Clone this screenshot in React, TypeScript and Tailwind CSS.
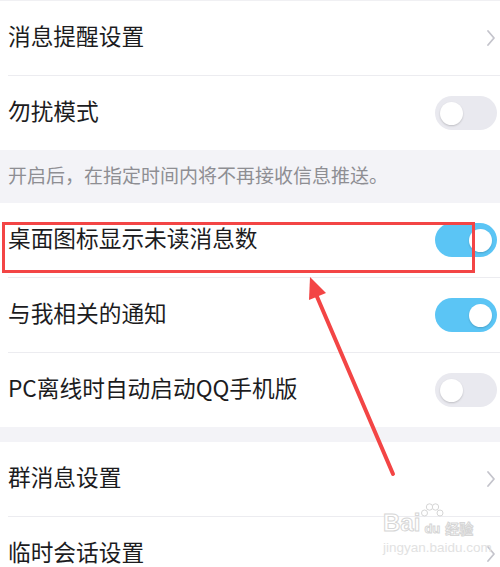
import React from 'react';

type Row =
  | { id: number; label: string; kind: 'link' }
  | { id: number; label: string; kind: 'toggle'; on: boolean };

const Chevron: React.FC = () => (
  <svg width="10" height="18" viewBox="0 0 10 18" className="mr-[4px] shrink-0">
    <polyline points="2,2 8,9 2,16" fill="none" stroke="#c4c4cc" strokeWidth="1.8" strokeLinecap="round" strokeLinejoin="round" />
  </svg>
);

const Toggle: React.FC<{ on: boolean }> = ({ on }) => (
  <div
    className={`mr-[3px] flex h-[34px] w-[62px] shrink-0 items-center rounded-full px-[5px] ${
      on ? 'justify-end bg-[#5bc5f5]' : 'justify-start bg-[#e9e9ef]'
    }`}
  >
    <div className="h-[23px] w-[23px] rounded-full bg-white shadow-[0_1px_2px_rgba(0,0,0,0.18)]" />
  </div>
);

const SettingRow: React.FC<{ row: Row; first?: boolean }> = ({ row, first }) => (
  <div
    className={`flex items-center justify-between bg-white pl-[8px] ${
      first ? 'h-[75px] border-t border-[#f0f0f3]' : 'h-[74px]'
    }`}
  >
    <span className="-translate-y-[2px] text-[22.7px] leading-none text-[#1c1c1e]">{row.label}</span>
    {row.kind === 'link' ? <Chevron /> : <Toggle on={row.on} />}
  </div>
);

const Divider: React.FC = () => (
  <div className="bg-white pl-[8px]">
    <div className="h-px bg-[#ececf0]" />
  </div>
);

const App: React.FC = () => {
  const top: Row[] = [
    { id: 1, label: '消息提醒设置', kind: 'link' },
    { id: 2, label: '勿扰模式', kind: 'toggle', on: false },
  ];
  const middle: Row[] = [
    { id: 3, label: '桌面图标显示未读消息数', kind: 'toggle', on: true },
    { id: 4, label: '与我相关的通知', kind: 'toggle', on: true },
    { id: 5, label: 'PC离线时自动启动QQ手机版', kind: 'toggle', on: false },
  ];
  const bottom: Row[] = [
    { id: 6, label: '群消息设置', kind: 'link' },
    { id: 7, label: '临时会话设置', kind: 'link' },
  ];

  const group = (rows: Row[], firstTop = false) =>
    rows.map((row, i) => (
      <React.Fragment key={row.id}>
        {i > 0 && <Divider />}
        <SettingRow row={row} first={firstTop && i === 0} />
      </React.Fragment>
    ));

  return (
    <div
      className="relative h-[567px] w-[500px] overflow-hidden bg-white"
      style={{ fontFamily: '"Noto Sans CJK SC", "Noto Sans", sans-serif' }}
    >
      {group(top, true)}

      <div className="flex h-[53px] items-center bg-[#f3f3f7] pl-[8px]">
        <span className="-translate-y-[2px] text-[19px] leading-none text-[#8e8e93]">开启后，在指定时间内将不再接收信息推送。</span>
      </div>

      {group(middle)}

      <div className="h-[15px] bg-[#f3f3f7]" />

      {group(bottom)}

      {/* annotation: red box */}
      <div className="absolute left-[2px] top-[222px] h-[51px] w-[473px] border-[3px] border-[#f34545]" />

      {/* annotation: arrow */}
      <svg className="absolute left-0 top-0" width="500" height="567" viewBox="0 0 500 567">
        <line x1="393" y1="474" x2="315" y2="292" stroke="#f34545" strokeWidth="4" strokeLinecap="round" />
        <polygon points="310,277 326,293 309,300" fill="#f34545" />
      </svg>

      {/* watermark */}
      <div className="absolute left-[383px] top-[511px] flex w-[92px] flex-col items-start">
        <div
          className="flex items-end text-[24px] font-bold leading-none text-white [-webkit-text-stroke:1px_#d6d6d6]"
          style={{ fontFamily: '"Liberation Sans", "Noto Sans CJK SC", sans-serif' }}
        >
          <span>Bai</span>
          <span className="relative flex h-[24px] w-[24px] items-end justify-center">
            <svg className="absolute left-0 top-[-9px]" width="24" height="20" viewBox="0 0 24 20">
              <circle cx="4.5" cy="11" r="3" fill="white" stroke="#d6d6d6" />
              <circle cx="9.5" cy="5" r="3.2" fill="white" stroke="#d6d6d6" />
              <circle cx="15.5" cy="5" r="3.2" fill="white" stroke="#d6d6d6" />
              <circle cx="20" cy="11" r="3" fill="white" stroke="#d6d6d6" />
            </svg>
            <span className="text-[13px]">du</span>
          </span>
          <span className="ml-[1px] text-[14px]" style={{ fontFamily: '"Noto Sans CJK SC", sans-serif' }}>
            经验
          </span>
        </div>
        <span
          className="mt-[6px] text-[13.5px] leading-none text-[#e2e2e2]"
          style={{ fontFamily: '"Liberation Sans", sans-serif' }}
        >
          jingyan.baidu.com
        </span>
      </div>
    </div>
  );
};

export default App;
